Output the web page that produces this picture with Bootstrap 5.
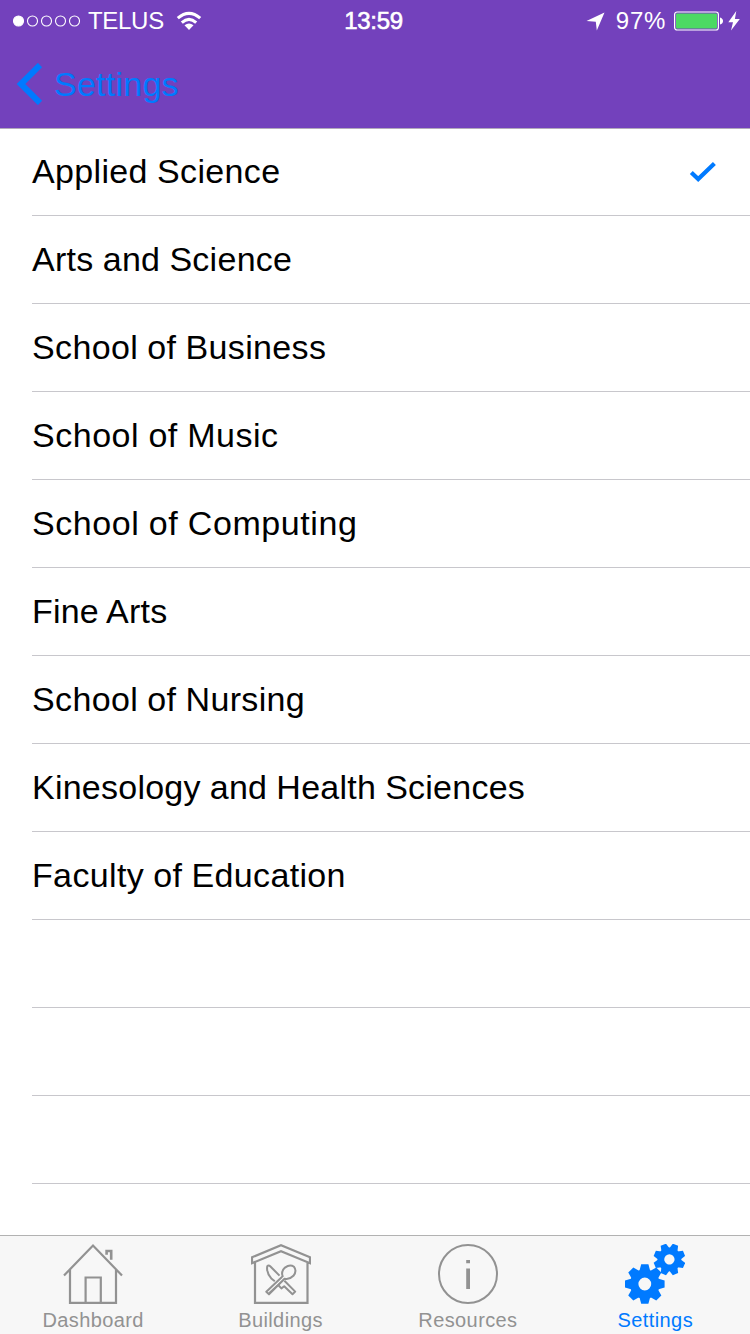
<!DOCTYPE html>
<html lang="en">
<head>
<meta charset="utf-8">
<meta name="viewport" content="width=device-width, initial-scale=1">
<title>Settings</title>
<link href="https://cdn.jsdelivr.net/npm/bootstrap@5.3.0/dist/css/bootstrap.min.css" rel="stylesheet">
<style>
  body { font-family: "Liberation Sans", Arial, sans-serif; height: 1334px; width: 750px; color: #000; overflow: hidden; }
  svg { display: block; flex: none; }
  .app-header { background: #7341bc; height: 128px; box-shadow: 0 1px 0 #b2a9bb; z-index: 1; }
  .status-bar { height: 40px; padding: 2px 10px 0 12px; font-size: 24px; line-height: 38px; color: #fff; }
  .status-side { flex: 1 1 0; }
  .carrier { letter-spacing: -.3px; margin-left: 8px; }
  .clock { margin: 0 5px 0 0; letter-spacing: -.3px; -webkit-text-stroke: .6px #fff; }
  .percent { margin-left: 11px; letter-spacing: .7px; }
  .nav-row { height: 88px; padding-left: 16px; }
  .back-link { color: #007aff; font-size: 34px; line-height: 40px; letter-spacing: .25px; }
  .faculties .list-group-item { height: 88px; margin-left: 32px; padding: 0 34px 2px 0; border-width: 0 0 1px; border-color: #c8c7cc; border-radius: 0; color: #000; font-size: 34px; line-height: 40px; letter-spacing: .35px; word-spacing: -.6px; background: #fff; }
  .tab-bar { height: 99px; background: #f7f7f7; border-top: 1px solid #b2b2b2; color: #929292; }
  .tab-bar .nav { margin-right: 1px; margin-left: -.5px; }
  .tab-bar .nav-link { color: inherit; padding: 8px 0 0; font-size: 20px; line-height: 24px; letter-spacing: .4px; }
  .tab-bar .nav-link.active { color: #007aff; }
  .tab-bar span { margin-top: 4px; }
</style>
</head>
<body class="d-flex flex-column bg-white">
<header class="app-header position-relative flex-shrink-0">
  <div class="status-bar d-flex align-items-center">
    <div class="status-side d-flex align-items-center">
      <svg width="68" height="14" viewBox="0 0 68 14" fill="none" stroke="#fff" stroke-width="1.1"><circle cx="6.5" cy="7" r="5" fill="#fff"/><circle cx="20.5" cy="7" r="5"/><circle cx="34.5" cy="7" r="5"/><circle cx="48.5" cy="7" r="5"/><circle cx="62.5" cy="7" r="5"/></svg>
      <span class="carrier">TELUS</span>
      <svg style="margin-left:12px" width="26" height="20" viewBox="0 0 26 20"><g fill="none" stroke="#fff" stroke-width="3.1"><path d="M1.8 7.2Q13-2.6 24.2 7.2"/><path d="M5.8 11.6Q13 5.2 20.2 11.6"/></g><path d="M8.5 14.3Q13 10.8 17.5 14.3L13 19Z" fill="#fff"/></svg>
    </div>
    <span class="clock">13:59</span>
    <div class="status-side d-flex align-items-center justify-content-end">
      <svg width="19" height="19" viewBox="0 0 19 19" fill="#fff"><path d="M18.5.5 10.8 18.5 9.8 9.8.5 9Z"/></svg>
      <span class="percent">97%</span>
      <svg class="ms-2" width="50" height="20" viewBox="0 0 50 20"><rect x=".6" y="1" width="43.8" height="18" rx="2.5" fill="none" stroke="#fff" stroke-width="1.2"/><rect x="2" y="2.4" width="41" height="15.2" rx="1" fill="#4cd964"/><path d="M46 6.5Q49 7.5 49 10T46 13.5Z" fill="#fff"/></svg>
      <svg style="margin-left:4px" width="12" height="20" viewBox="0 0 12 20" fill="#fff"><path d="M8.3 0 .3 11.3 5 11.3 3 19.6 11.8 7.9 6.9 7.9Z"/></svg>
    </div>
  </div>
  <nav class="nav-row d-flex align-items-center">
    <a href="#" class="back-link d-flex align-items-center text-decoration-none">
      <svg width="27" height="42" viewBox="0 0 27 42" fill="none" stroke="#007aff" stroke-width="6"><path d="M24 2 4.9 21 24 40"/></svg>
      <span style="margin-left:11px">Settings</span>
    </a>
  </nav>
</header>
<main class="flex-grow-1 overflow-hidden">
  <ul class="faculties list-group list-group-flush">
    <li class="list-group-item d-flex align-items-center justify-content-between"><span>Applied Science</span>
      <svg width="27" height="22" viewBox="0 0 27 22" fill="none" stroke="#007aff" stroke-width="4.2"><path d="M2.3 12.4 9.2 19 25.4 3.4"/></svg></li>
    <li class="list-group-item d-flex align-items-center"><span style="letter-spacing:.28px">Arts and Science</span></li>
    <li class="list-group-item d-flex align-items-center"><span>School of Business</span></li>
    <li class="list-group-item d-flex align-items-center"><span style="letter-spacing:.52px">School of Music</span></li>
    <li class="list-group-item d-flex align-items-center"><span style="letter-spacing:.58px">School of Computing</span></li>
    <li class="list-group-item d-flex align-items-center"><span style="letter-spacing:.2px">Fine Arts</span></li>
    <li class="list-group-item d-flex align-items-center"><span>School of Nursing</span></li>
    <li class="list-group-item d-flex align-items-center"><span style="letter-spacing:.24px">Kinesology and Health Sciences</span></li>
    <li class="list-group-item d-flex align-items-center"><span>Faculty of Education</span></li>
    <li class="list-group-item"></li>
    <li class="list-group-item"></li>
    <li class="list-group-item"></li>
    <li class="list-group-item"></li>
  </ul>
</main>
<footer class="tab-bar flex-shrink-0">
  <nav class="nav nav-justified flex-nowrap h-100">
    <a href="#" class="nav-link d-flex flex-column align-items-center">
      <svg width="60" height="60" viewBox="0 0 60 60" fill="none" stroke="#929292" stroke-width="2.2"><path d="M1 31.5 30 1.6 59 31.5M7 25.5V58.8H53V25.5M22.6 58V33.5H37.8V58"/><path d="M43.6 10.8V7H48.2V15.8" stroke-width="2.6"/></svg>
      <span>Dashboard</span></a>
    <a href="#" class="nav-link d-flex flex-column align-items-center">
      <svg width="60" height="60" viewBox="0 0 60 60" fill="none" stroke="#929292" stroke-width="2.2"><path d="M1 13.3 30 1.3 59 13.3V19.2L30 7.2 1 19.2ZM4 18V58.8H56.5V18"/>
        <g stroke-width="2" stroke-linejoin="round"><path d="M28.5 31.6 19.2 22.3Q17.5 20.8 16.3 22.2 15 28.5 20.6 34.8L23.8 37.2M27.2 41 30.4 44.4 33.2 42.2 41.5 50.2 44.2 47.6 33.4 36.8"/><path d="M32 33Q29.4 27.8 34 23.6 39 20 43 22.8 46.2 26.8 42.4 31.8 38.2 36 33.6 34.8L18 50.4 15.3 47.8 31.2 32.8"/><path d="M33.6 34.8 17.6 49.2" stroke-width="1.2"/></g></svg>
      <span>Buildings</span></a>
    <a href="#" class="nav-link d-flex flex-column align-items-center">
      <svg width="60" height="60" viewBox="0 0 60 60"><circle cx="30" cy="30" r="29" fill="none" stroke="#929292" stroke-width="2"/><path d="M28.2 16H32V19.3H28.2ZM28.2 24.5H32V45H28.2Z" fill="#929292"/></svg>
      <span>Resources</span></a>
    <a href="#" class="nav-link active d-flex flex-column align-items-center" aria-current="page">
      <svg width="60" height="60" viewBox="0 0 60 60">
        <defs><path id="tooth" d="M-5.4-13-3.6-19.8H3.6L5.4-13Z"/>
          <g id="gear"><circle r="10.6" fill="none" stroke="#007aff" stroke-width="8.4"/><g fill="#007aff"><use href="#tooth"/><use href="#tooth" transform="rotate(45)"/><use href="#tooth" transform="rotate(90)"/><use href="#tooth" transform="rotate(135)"/><use href="#tooth" transform="rotate(180)"/><use href="#tooth" transform="rotate(225)"/><use href="#tooth" transform="rotate(270)"/><use href="#tooth" transform="rotate(315)"/></g></g></defs>
        <use href="#gear" transform="translate(19.8 40)"/>
        <use href="#gear" transform="translate(44.4 15.4) rotate(22.5) scale(.8)"/>
      </svg>
      <span>Settings</span></a>
  </nav>
</footer>
<script src="https://cdn.jsdelivr.net/npm/bootstrap@5.3.0/dist/js/bootstrap.bundle.min.js"></script>
</body>
</html>
